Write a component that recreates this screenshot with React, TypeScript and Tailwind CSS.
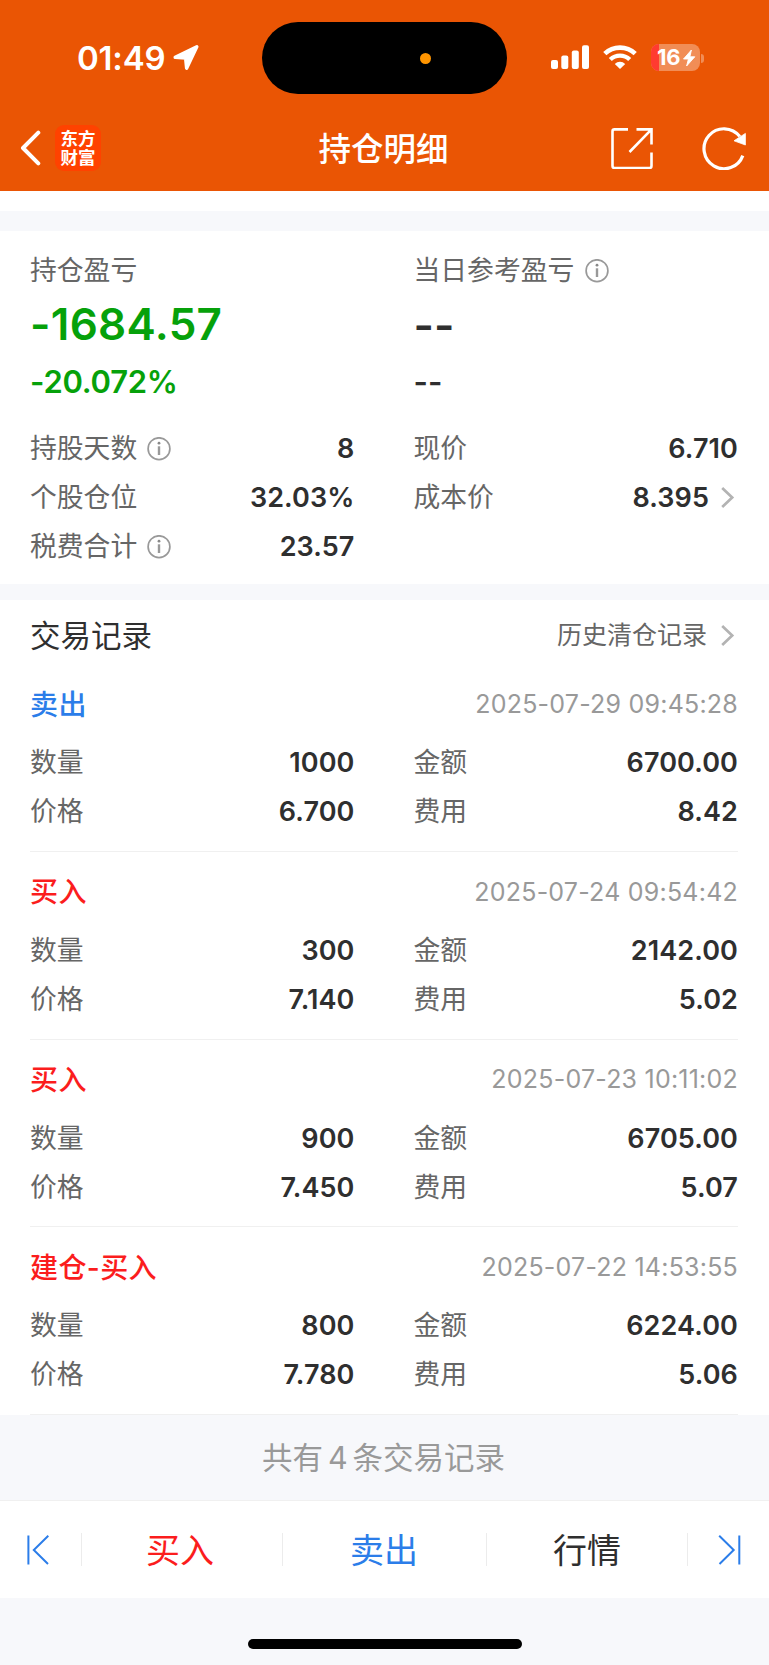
import type { ReactNode } from "react";

const CJK = "font-['Inter','Noto_Sans_CJK_SC',sans-serif]";

function InfoIcon() {
  return (
    <svg className="ml-[10px] h-[24px] w-[24px] shrink-0" viewBox="0 0 24 24" fill="none">
      <circle cx="12" cy="11.7" r="10.9" stroke="#999" strokeWidth="1.7" />
      <circle cx="12" cy="6.2" r="1.4" fill="#888" />
      <path d="M12 9.3V18" stroke="#999" strokeWidth="2.4" />
    </svg>
  );
}

function Chevron() {
  return (
    <svg className="h-[22px] w-[14px]" viewBox="0 0 14 22" fill="none">
      <path d="M1.2 1L11.2 10.5L1.2 20" stroke="#b3b3b3" strokeWidth="2.7" />
    </svg>
  );
}

function Row({ label, value, info, arrow }: { label: string; value: ReactNode; info?: boolean; arrow?: boolean }) {
  return (
    <div className="flex h-[49px] items-center">
      <span className="text-[26.8px] leading-[49px] text-[#666]">{label}</span>
      {info && <InfoIcon />}
      <span className="ml-auto text-[27px] leading-[49px] font-semibold tracking-[0.1px] text-[#2f2f2f]">{value}</span>
      {arrow && (
        <span className="mr-[3px] ml-[12px]">
          <Chevron />
        </span>
      )}
    </div>
  );
}

function TradeRecord({ t }: { t: Trade }) {
  return (
    <div className="h-[187.67px] border-b border-[#f0f0f0] pt-[16px]">
      <div className="flex h-[49px] items-center justify-between">
        <span className={`text-[28px] font-medium tracking-[0.4px] ${t.sell ? "text-[#2b7de9]" : "text-[#fb1d1d]"}`}>
          {t.type}
        </span>
        <span className="text-[25px] tracking-[0.22px] text-[#999]">{t.time}</span>
      </div>
      <div className="grid grid-cols-2 gap-x-[59px] pt-[9px]">
        <Row label="数量" value={t.qty} />
        <Row label="金额" value={t.amount} />
        <Row label="价格" value={t.price} />
        <Row label="费用" value={t.fee} />
      </div>
    </div>
  );
}

type Trade = { type: string; sell?: boolean; time: string; qty: string; amount: string; price: string; fee: string };

const trades: Trade[] = [
  { type: "卖出", sell: true, time: "2025-07-29 09:45:28", qty: "1000", amount: "6700.00", price: "6.700", fee: "8.42" },
  { type: "买入", time: "2025-07-24 09:54:42", qty: "300", amount: "2142.00", price: "7.140", fee: "5.02" },
  { type: "买入", time: "2025-07-23 10:11:02", qty: "900", amount: "6705.00", price: "7.450", fee: "5.07" },
  { type: "建仓-买入", time: "2025-07-22 14:53:55", qty: "800", amount: "6224.00", price: "7.780", fee: "5.06" },
];

function StatusBar() {
  return (
    <div className="flex h-[116px] items-center">
      <span className="ml-[77px] w-[96px] pb-[1px] text-[33px] leading-[40px] font-semibold tracking-[-0.2px] text-white">01:49</span>
      <svg className="h-[26px] w-[26px]" viewBox="0 0 26 26">
        <path d="M23.8 1.8 L13.6 23.2 L12.6 13.1 L2.2 12.4 Z" fill="#fff" stroke="#fff" strokeWidth="3.4" strokeLinejoin="round" />
      </svg>
      <div className="ml-[63px] flex h-[72px] w-[245px] items-center rounded-full bg-black pl-[158px]">
        <span className="h-[11px] w-[11px] rounded-full bg-[#ff9500]" />
      </div>
      <svg className="ml-[44px] h-[26px] w-[39px]" viewBox="0 0 39 26" fill="#fff">
        <rect x="0" y="15" width="7" height="9" rx="2" />
        <rect x="10.3" y="10.5" width="7" height="13.5" rx="2" />
        <rect x="20.8" y="5.5" width="7" height="18.5" rx="2" />
        <rect x="31" y="0.2" width="7" height="23.8" rx="2" />
      </svg>
      <svg className="ml-[13px] h-[26px] w-[34px]" viewBox="0 0 34 26" fill="none">
        <path d="M1.8 8.7 A22 22 0 0 1 32.2 8.7" stroke="#fff" strokeWidth="4.6" />
        <path d="M7.3 14.5 A14 14 0 0 1 26.7 14.5" stroke="#fff" strokeWidth="4.4" />
        <path d="M17 24.1 L11.8 18.9 A7.4 7.4 0 0 1 22.2 18.9 Z" fill="#fff" />
      </svg>
      <div className="mb-[1px] ml-[14px] flex h-[27px] w-[49px] items-center overflow-hidden rounded-[8px] bg-[#f18d56]">
        <span className="h-[27px] w-[8px] shrink-0 bg-[#ff3b30]" />
        <span className="ml-[-2px] w-[25px] shrink-0 text-[22px] leading-[27px] font-bold tracking-[-0.3px] text-white">16</span>
        <svg className="h-[18px] w-[14px] shrink-0" viewBox="0 0 14 18">
          <path d="M9.4 1 L1.5 10 H6.4 L4.6 17 L12.8 7.8 H7.9 Z" fill="#fff" stroke="#fff" strokeWidth="0.9" strokeLinejoin="round" />
        </svg>
      </div>
      <span className="ml-[1px] h-[9px] w-[3px] rounded-r-full bg-[#f18d56]" />
    </div>
  );
}

function TitleBar() {
  return (
    <div className="flex h-[64px] items-center">
      <svg className="ml-[20px] h-[36px] w-[21px]" viewBox="0 0 21 36" fill="none">
        <path d="M18.3 2.7L3 18L18.3 33.3" stroke="#fff" strokeWidth="4" strokeLinecap="round" strokeLinejoin="round" />
      </svg>
      <div className="ml-[14px] flex h-[46px] w-[46px] flex-col items-center justify-center rounded-[9px] bg-[#ff4200] pb-[1px] text-[17.5px] leading-[19px] font-bold text-white">
        <span>东方</span>
        <span>财富</span>
      </div>
      <span className="ml-[217.5px] w-[129.5px] pt-[3px] text-[32.5px] leading-[61px] font-medium whitespace-nowrap text-white">持仓明细</span>
      <svg className="ml-[163px] h-[42px] w-[42px]" viewBox="0 0 42 42" fill="none" stroke="#fff" strokeWidth="2.6">
        <path d="M17 2.4H3.5Q1.5 2.4 1.5 4.4V39Q1.5 41 3.5 41H38.5Q40.5 41 40.5 39V25.5" />
        <path d="M25.5 2.4H40.5V17.5M40 2.9L18.5 25" />
      </svg>
      <svg className="ml-[49px] h-[44px] w-[44px]" viewBox="0 0 44 44" fill="none">
        <path d="M40.8 29.6 A20 20 0 1 1 37.8 10.5" stroke="#fff" strokeWidth="3.2" />
        <path d="M43.4 7.4 V19 L32 14.8 Z" fill="#fff" stroke="#fff" strokeWidth="0.8" strokeLinejoin="round" />
      </svg>
    </div>
  );
}

function BottomBar() {
  return (
    <div className="flex h-[98px] items-center border-t border-[#f0f0f0] bg-white text-[34px]">
      <div className="flex w-[81px] pl-[27px]">
        <svg className="h-[30px] w-[23px]" viewBox="0 0 23 30" fill="none" stroke="#2b7de9" strokeWidth="2">
          <path d="M1.4 0.5V29.5M21.3 0.8L6.8 15L21 29" />
        </svg>
      </div>
      <div className="flex h-[33px] w-[201px] items-center justify-center border-l border-[#ececec] pt-[1px] pr-[4px] text-[#fb1d1d]">买入</div>
      <div className="flex h-[33px] w-[204px] items-center justify-center border-l border-[#ececec] pt-[1px] pr-[1px] text-[#2b7de9]">卖出</div>
      <div className="flex h-[33px] w-[201px] items-center justify-center border-l border-[#ececec] pt-[1px] text-[#2f2f2f]">行情</div>
      <div className="flex h-[33px] flex-1 items-center border-l border-[#ececec] pl-[30px]">
        <svg className="h-[30px] w-[23px]" viewBox="0 0 23 30" fill="none" stroke="#2b7de9" strokeWidth="2">
          <path d="M21.3 0.5V29.5M1.2 0.8L15.7 15L1.5 29" />
        </svg>
      </div>
    </div>
  );
}

export default function App() {
  return (
    <div className={`flex h-[1665px] w-[769px] flex-col overflow-hidden bg-[#f7f8fb] ${CJK}`}>
      <header className="h-[191px] bg-[#ea5504]">
        <StatusBar />
        <TitleBar />
      </header>
      <div className="h-[20px] bg-white" />
      <section className="mt-[20px] h-[353px] bg-white pt-[15px] pr-[31px] pl-[30px]">
        <div className="grid grid-cols-2 gap-x-[59px]">
          <div>
            <div className="h-[49px] text-[26.8px] leading-[49px] text-[#666]">持仓盈亏</div>
            <div className="h-[58px] text-[44px] leading-[58px] font-semibold tracking-[0.3px] text-[#06a10a]">-1684.57</div>
            <div className="h-[56px] text-[31px] leading-[57px] font-semibold tracking-[-0.25px] text-[#06a10a]">-20.072%</div>
          </div>
          <div>
            <div className="flex h-[49px] items-center text-[26.8px] leading-[49px] text-[#666]">
              <span className="pr-[1px]">当日参考盈亏</span>
              <InfoIcon />
            </div>
            <div className="h-[58px] text-[44px] leading-[60px] font-semibold text-[#2f2f2f]">--</div>
            <div className="h-[56px] text-[31px] leading-[58px] font-semibold text-[#2f2f2f]">--</div>
          </div>
        </div>
        <div className="grid grid-cols-2 gap-x-[59px] pt-[15px]">
          <Row label="持股天数" value="8" info />
          <Row label="现价" value="6.710" />
          <Row label="个股仓位" value="32.03%" />
          <Row label="成本价" value="8.395" arrow />
          <Row label="税费合计" value="23.57" info />
        </div>
      </section>
      <section className="mt-[16px] h-[815px] bg-white pr-[31px] pl-[30px]">
        <div className="flex h-[64.33px] items-center pt-[7px]">
          <span className="text-[30.5px] text-[#2f2f2f]">交易记录</span>
          <span className="mr-[14px] ml-auto pt-[1px] text-[25px] text-[#666]">历史清仓记录</span>
          <span className="mr-[3px]">
            <Chevron />
          </span>
        </div>
        {trades.map((t) => (
          <TradeRecord key={t.time} t={t} />
        ))}
      </section>
      <div className="h-[85px] pr-[2px] text-center text-[30.5px] leading-[86px] text-[#999]">
        共有<span className="mx-[5px]">4</span>条交易记录
      </div>
      <BottomBar />
      <div className="mt-[41px] ml-[247.5px] h-[10px] w-[274px] rounded-full bg-black" />
    </div>
  );
}
